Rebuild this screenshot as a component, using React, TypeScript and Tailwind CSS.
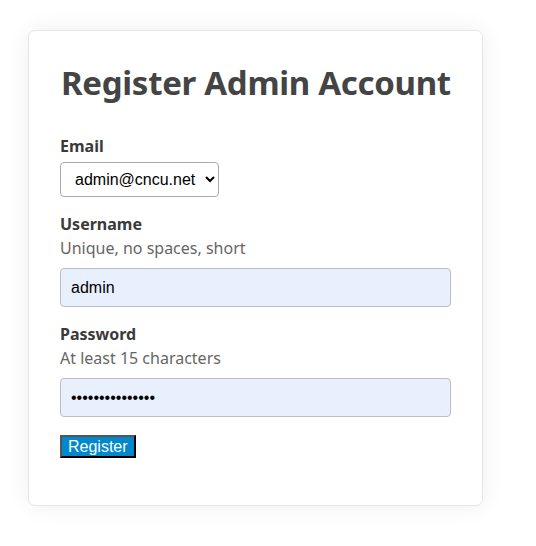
import React from "react";

export default function App() {
  return (
    <div className="min-h-[546px] bg-white pt-[30px] pl-[28px]">
      <div className="w-[455px] h-[476px] border border-[#e6e6e6] rounded-[7px] bg-white shadow-[0_0_24px_rgba(0,0,0,0.07)] px-[31px] pt-[28px] font-['Noto_Sans',sans-serif] text-[#444]">
        <h1 className="text-[33px] tracking-[-0.3px] font-bold leading-[48px] m-0 ml-[1px] whitespace-nowrap">Register Admin Account</h1>
        <form className="mt-[27px] flex flex-col" onSubmit={(e) => e.preventDefault()}>
          <div className="flex flex-col mb-[15px]">
            <label className="font-bold text-[16px] leading-[24px] text-[#3a3a3a]">Email</label>
            <select className="mt-[4px] self-start h-[35px] pl-[10px] pr-[6px] border border-[#aaa] rounded-[4px] bg-white text-black text-[16px] font-['Liberation_Sans',Arial,sans-serif]">
              <option>admin@cncu.net</option>
            </select>
          </div>
          <div className="flex flex-col mb-[15px]">
            <label className="font-bold text-[16px] leading-[24px] text-[#3a3a3a]">Username</label>
            <span className="text-[16px] leading-[24px] text-[#666]">Unique, no spaces, short</span>
            <input
              className="mt-[8px] h-[39px] px-[10px] border border-[#bdbdbd] rounded-[4px] bg-[#e8f0fe] text-black text-[16px] font-['Liberation_Sans',Arial,sans-serif] outline-none"
              defaultValue="admin"
            />
          </div>
          <div className="flex flex-col mb-[17px]">
            <label className="font-bold text-[16px] leading-[24px] text-[#3a3a3a]">Password</label>
            <span className="text-[16px] leading-[24px] text-[#666]">At least 15 characters</span>
            <input
              type="password"
              className="mt-[8px] h-[39px] px-[10px] border border-[#bdbdbd] rounded-[4px] bg-[#e8f0fe] text-black text-[16px] font-['Liberation_Sans',Arial,sans-serif] outline-none"
              defaultValue="aaaaaaaaaaaaaaa"
            />
          </div>
          <div>
            <button
              type="submit"
              className="h-[23px] px-[6px] bg-[#0088cc] text-white text-[16px] leading-[19px] font-['Liberation_Sans',Arial,sans-serif] border-2 border-t-[#555] border-l-[#555] border-r-black border-b-black"
            >
              Register
            </button>
          </div>
        </form>
      </div>
    </div>
  );
}
